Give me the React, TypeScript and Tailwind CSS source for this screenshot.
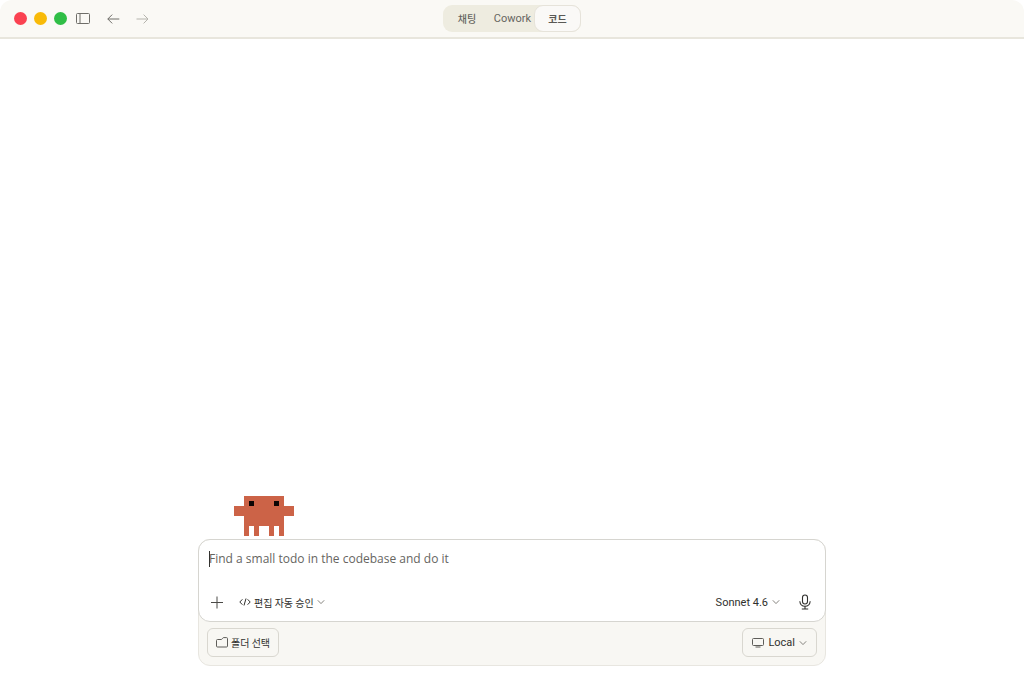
import { ReactNode } from "react";

const latin = "font-['Roboto','Noto_Sans_CJK_KR',sans-serif]";
const korean = "font-['Noto_Sans_CJK_KR',sans-serif]";

function Chevron() {
  return (
    <svg width="8" height="8" viewBox="0 0 8 8" fill="none" stroke="#85847e" aria-hidden="true">
      <path d="M.8 2.3 4 5.6l3.2-3.3" />
    </svg>
  );
}

function Mascot() {
  return (
    <svg
      width="60"
      height="40"
      viewBox="0 0 12 8"
      shapeRendering="crispEdges"
      className="ml-9"
      role="img"
      aria-label="Mascot"
    >
      <path
        fill="#cc6347"
        d="M2 0h8v2h2v2h-2v4H9V6H8v2H7V6H5v2H4V6H3v2H2V4H0V2h2z"
      />
      <path fill="#0b0504" d="M3 1h1v1H3zM8 1h1v1H8z" />
    </svg>
  );
}

function IconButton({ label, children }: { label: string; children: ReactNode }) {
  return (
    <button aria-label={label} className="flex size-4 items-center justify-center">
      {children}
    </button>
  );
}

function TitleBar() {
  return (
    <header className="grid h-[39px] grid-cols-[1fr_auto_1fr] items-center rounded-t-xl border-b-2 border-[#e8e6dd] bg-[#faf9f5]">
      <div className="flex items-center pl-3.5 text-[#6f6e69]">
        <div className="flex gap-[7px]">
          <button aria-label="Close" className="size-[13px] rounded-full bg-[#fa4251]" />
          <button aria-label="Minimize" className="size-[13px] rounded-full bg-[#f8ba08]" />
          <button aria-label="Zoom" className="size-[13px] rounded-full bg-[#2fbe46]" />
        </div>
        <div className="ml-2 flex gap-3.5">
          <IconButton label="Toggle sidebar">
            <svg width="16" height="16" viewBox="0 0 16 16" fill="none" stroke="currentColor">
              <rect x="1.5" y="2.5" width="13" height="10" rx="1" />
              <path d="M5 2.5v10" />
            </svg>
          </IconButton>
          <IconButton label="Back">
            <svg width="16" height="16" viewBox="0 0 16 16" fill="none" stroke="currentColor">
              <path d="M14.3 8H2.8M7.2 3.6 2.8 8l4.4 4.4" />
            </svg>
          </IconButton>
          <IconButton label="Forward">
            <svg width="16" height="16" viewBox="0 0 16 16" fill="none" stroke="#b5b4ad">
              <path d="M1.5 8H13M8.6 3.6 13 8l-4.4 4.4" />
            </svg>
          </IconButton>
        </div>
      </div>

      <nav className="flex h-[27px] rounded-[9px] bg-[#eeece0] text-[11px] text-[#66655f]">
        <button className={`w-12 text-[10px] font-medium ${korean}`}>채팅</button>
        <button className="w-[43px] pt-0.5">Cowork</button>
        <button className={`w-[47px] rounded-[9px] border border-[#e6e3da] bg-[#faf9f7] text-[10px] font-bold text-[#5a5955] ${korean}`}>
          코드
        </button>
      </nav>
    </header>
  );
}

function Composer() {
  return (
    <div className="rounded-xl border border-[#e8e6e0] bg-[#f8f7f3]">
      <div className="-mx-px -mt-px rounded-xl border border-[#d6d5d0] bg-white px-2.5">
        <div className="relative mt-2 flex h-[22px] items-center">
          <span className="absolute left-0 h-4 w-px bg-[#33322f]" />
          <input
            type="text"
            aria-label="Prompt"
            placeholder="Find a small todo in the codebase and do it"
            className="w-full font-['Open_Sans',sans-serif] text-[12px] outline-none placeholder:text-[#66655f]"
          />
        </div>

        <div className="mt-[23px] mb-2.5 flex h-[18px] items-center text-[11px] text-[#30302d]">
          <button aria-label="Add" className="ml-px">
            <svg width="14" height="14" viewBox="0 0 14 14" fill="none" stroke="#4b4a46">
              <path d="M7 1.5v12M1 7.5h12" />
            </svg>
          </button>
          <button className={`ml-[15px] flex items-center gap-[3px] text-[10px] ${korean}`}>
            <svg width="12" height="10" viewBox="0 0 12 10" fill="none" stroke="currentColor">
              <path d="M3.4 2.3.8 5l2.600 2.700M8.600 2.300 11.200 5 8.600 7.700M7 1.500l-2 7" />
            </svg>
            편집 자동 승인
            <Chevron />
          </button>
          <button className="ml-auto flex items-center gap-1">
            <span className="pt-0.5">Sonnet 4.6</span>
            <Chevron />
          </button>
          <button aria-label="Dictate" className="mr-[3px] ml-[18px]">
            <svg width="14" height="16" viewBox="0 0 14 16" fill="none" stroke="currentColor" strokeWidth="1.1">
              <rect x="4.5" y="1" width="5" height="9" rx="2.5" />
              <path d="M1.800 7.300c.3 3 2.200 5 5.200 5s4.900-2 5.200-5M7 12.300v2.700M3.800 15h6.400" />
            </svg>
          </button>
        </div>
      </div>

      <div className="flex items-center justify-between px-2 pt-1.5 pb-2 text-[#30302d]">
        <button className={`flex h-[29px] items-center gap-[3px] rounded-md border border-[#d9d7d0] px-2 text-[10px] ${korean}`}>
          <svg width="12" height="11" viewBox="0 0 12 11" fill="none" stroke="#5e5d59">
            <path d="M1.500 2.500h3.600c.5 0 .8-.2 1.100-.6l.5-.7c.2-.4.500-.6 1-.6H10.500a1 1 0 0 1 1 1V9a1 1 0 0 1-1 1h-9a1 1 0 0 1-1-1V3.500a1 1 0 0 1 1-1z" />
          </svg>
          폴더 선택
        </button>
        <button className="flex h-[29px] items-center gap-1 rounded-md border border-[#d9d7d0] px-[9px] text-[11px]">
          <svg width="12" height="11" viewBox="0 0 12 11" fill="none" stroke="#5e5d59">
            <rect x=".5" y="1.500" width="11" height="7" rx="1" />
            <path d="M3.500 10h5" />
          </svg>
          <span className="pt-0.5">Local</span>
          <Chevron />
        </button>
      </div>
    </div>
  );
}

export default function App() {
  return (
    <div className={`flex min-h-screen flex-col bg-white ${latin}`}>
      <TitleBar />
      <main className="mx-auto mt-auto mb-[17px] w-full max-w-[628px]">
        <Mascot />
        <div className="mt-[3px]">
          <Composer />
        </div>
      </main>
    </div>
  );
}
